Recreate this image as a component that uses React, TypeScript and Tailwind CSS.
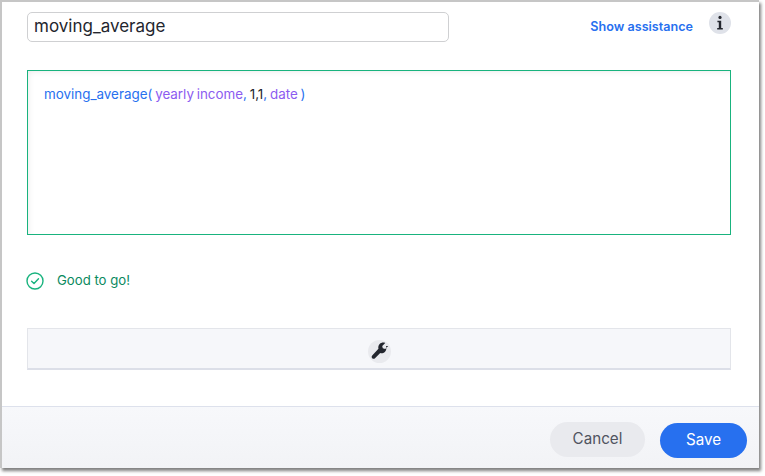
import React from "react";

export default function App() {
  return (
    <div className="w-[765px] h-[476px] bg-white overflow-hidden font-['Inter','Liberation_Sans',sans-serif]">
      <div className="w-[759px] h-[468px] bg-white border-t-2 border-l-2 border-[#c6c6c6] flex flex-col shadow-[2px_3px_3px_#808080]">
        <div className="flex-1 flex flex-col pl-[25px] pr-[28px] pt-[10px]">
          <div className="flex items-center h-[30px]">
            <div className="w-[422px] h-[30px] border border-[#cfd0d2] rounded-[5px] flex items-center px-[6px] text-[17px] text-[#23262e]">
              moving_average
            </div>
            <div className="ml-auto text-[12.6px] font-semibold text-[#2770ef] mr-[16px]">Show assistance</div>
            <div className="w-[22px] h-[22px] mb-[8px] rounded-full bg-[#dfe2e9] flex items-center justify-center">
              <svg width="12" height="16" viewBox="0 0 12 16" fill="#23262e">
                <circle cx="6" cy="2.4" r="1.6" />
                <path d="M3.4 5.8h3.8v7.2h1.6v1.4H3.2V13h1.6V7.2H3.4z" />
              </svg>
            </div>
          </div>
          <div className="mt-[28px] h-[165px] border border-[#19b37e] shadow-[inset_4px_4px_6px_-4px_#e6e6e6] pt-[15px] pl-[16px] text-[13.4px] leading-[16px] text-[#23262e] [word-spacing:-1px]">
            <span className="text-[#2770ef]">moving_average(</span>{" "}
            <span className="text-[#8c5cf0]">yearly income</span>
            <span className="text-[#2770ef]">,</span> 1,1<span className="text-[#2770ef]">,</span>{" "}
            <span className="text-[#8c5cf0]">date</span>{" "}
            <span className="text-[#2770ef]">)</span>
          </div>
          <div className="mt-[36px] h-[20px] flex items-center text-[13.2px] text-[#0b8a5f] -ml-[1px]">
            <svg width="18" height="18" viewBox="0 0 18 18" fill="none" stroke="#19b37e" strokeWidth="1.4" strokeLinecap="round" strokeLinejoin="round">
              <circle cx="9" cy="9" r="8" />
              <path d="M5.6 9.3l2.4 2.3 4.5-4.8" />
            </svg>
            <span className="ml-[13px]">Good to go!</span>
          </div>
          <div className="mt-[37px] h-[42px] bg-[#f6f7fa] border border-[#e3e5ea] border-b-2 border-b-[#dcdfe8] flex items-center justify-center">
            <div className="w-[23px] h-[23px] mt-[5px] rounded-full bg-[#e9eaee] flex items-center justify-center">
              <svg width="20" height="20" viewBox="0 0 18 18" fill="#23262e">
                <path d="M16.3 4.4l-2.7 2.7-2.2-.5-.5-2.2 2.7-2.7c-1.8-.7-3.8-.3-5 1-1.1 1.1-1.5 2.7-1.1 4.2L1.9 13c-.7.7-.7 1.8 0 2.5s1.8.7 2.5 0l4.7-4.6c1.5.4 3.1 0 4.2-1.1 1.3-1.3 1.7-3.6 1-5.4z" transform="translate(1 0)" />
              </svg>
            </div>
          </div>
        </div>
        <div className="h-[62px] bg-gradient-to-b from-[#f7f8fb] to-[#f2f3f6] border-t border-[#dde1ec] flex items-start justify-end pr-[12px] pt-[15px]">
          <div className="w-[95px] h-[35px] rounded-full bg-[#e9eaee] flex items-center justify-center text-[15.2px] text-[#50545f] mr-[15px]">Cancel</div>
          <div className="w-[87px] h-[35px] mt-[1px] rounded-full bg-[#2770ef] flex items-center justify-center text-[15.2px] text-white">Save</div>
        </div>
      </div>
    </div>
  );
}
